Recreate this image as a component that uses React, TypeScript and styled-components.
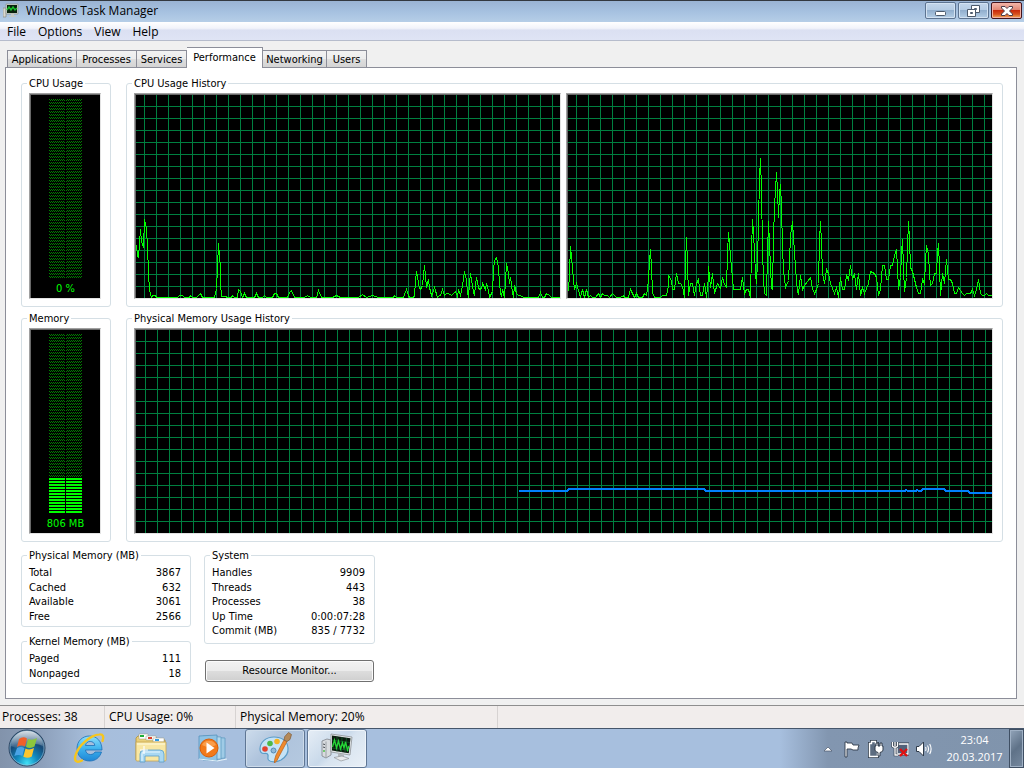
import React from 'react';
import styled, { createGlobalStyle, css } from 'styled-components';

const dialogFont = '"DejaVu Sans Condensed", "Noto Sans", sans-serif';
const shellFont = '"Open Sans", "Noto Sans", sans-serif';

const GlobalStyle = createGlobalStyle`
  *, *::before, *::after { box-sizing: border-box; }
  html, body { margin: 0; padding: 0; background: #f0f0f0; }
  button { font: inherit; color: inherit; margin: 0; cursor: default; }
`;

/* ---------- window frame ---------- */

const Desktop = styled.div`
  display: flex;
  flex-direction: column;
  min-height: 100vh;
  font-family: ${dialogFont};
  font-size: 11px;
  line-height: 14px;
  color: #000;
`;

const TitleBar = styled.header`
  display: flex;
  align-items: flex-start;
  height: 22px;
  padding: 0 2px 0 3px;
  border-top: 1px solid #33383f;
  background: linear-gradient(#9ab3d3, #a6c1e0 50%, #b6cee7);
  font-family: ${shellFont};
  font-size: 12px;
  line-height: 20px;
`;

const TitleText = styled.h1`
  flex: 1;
  margin: 0;
  padding-left: 7px;
  font-size: 12px;
  font-weight: 400;
`;

const TitleIcon = styled.svg`
  width: 16px;
  height: 16px;
  margin-top: 2px;
`;

const WindowButtons = styled.div`
  display: flex;
  gap: 2px;
  padding-top: 1px;
`;

const WindowButton = styled.button<{ $close?: boolean }>`
  display: flex;
  align-items: center;
  justify-content: center;
  width: 31px;
  height: 17px;
  padding: 0;
  border: 1px solid ${(p) => (p.$close ? '#43141c' : '#5d7491')};
  border-radius: 2px;
  box-shadow: inset 0 0 0 1px ${(p) => (p.$close ? '#f3b0a4' : '#d3e2f2')};
  background: ${(p) =>
    p.$close
      ? 'linear-gradient(#f3b7ab, #e08370 48%, #c92a0c 50%, #d8501f 75%, #f0b25c)'
      : 'linear-gradient(#c3d6ea, #b4cbe3 48%, #92afce 50%, #b4cee6)'};
`;

const MenuBar = styled.nav`
  display: flex;
  height: 19px;
  padding: 0 7px;
  gap: 12px;
  border-bottom: 1px solid #b6bccc;
  background: linear-gradient(#fff, #f1f3fa 35%, #dbe0f2 45%, #dfe4f5);
  font-family: ${shellFont};
  font-size: 12px;
`;

const MenuItem = styled.button`
  padding: 2px 0 0;
  border: 0;
  background: none;
  line-height: 16px;
`;

/* ---------- tabs ---------- */

const Client = styled.main`
  display: flex;
  flex: 1;
  flex-direction: column;
  padding: 6px 7px 6px 5px;
`;

const TabStrip = styled.div`
  display: flex;
  align-items: flex-end;
  height: 20px;
  padding-left: 2px;
`;

const Tab = styled.button<{ $width: number; $active?: boolean }>`
  width: ${(p) => p.$width}px;
  height: 17px;
  padding: 2px 0 0;
  border: 1px solid #8c8e99;
  border-bottom: 0;
  border-left-width: 0;
  background: linear-gradient(#f2f2f2, #ececec 50%, #dedede 52%, #d4d4d4);
  line-height: 14px;
  white-space: nowrap;
  &:first-child { border-left-width: 1px; }
  ${(p) =>
    p.$active &&
    css`
      height: 21px;
      margin-bottom: -1px;
      padding: 0 0 1px;
      z-index: 1;
      background: #fff;
    `}
`;

const TabPage = styled.section`
  display: flex;
  flex: 1;
  flex-direction: column;
  gap: 5px;
  padding: 7px 13px 14px 15px;
  border: 1px solid #8c8e99;
  background: #fff;
`;

/* ---------- group boxes ---------- */

const Charts = styled.div`
  display: grid;
  flex: 1;
  grid-template-columns: 90px minmax(0, 1fr);
  grid-template-rows: 1fr 1fr;
  gap: 3px 15px;
`;

const Group = styled.fieldset`
  display: flex;
  flex-direction: column;
  min-width: 0;
  margin: 0;
  padding: 0 5px;
  border: 1px solid #d5dfe5;
  border-radius: 3px;
`;

const Legend = styled.legend`
  padding: 2px 2px 0;
  line-height: 14px;
`;

const ChartRow = styled.div`
  display: flex;
  flex: 1;
  gap: 5px;
  padding: 2px 4px 7px 2px;
`;

const well = css`
  border: 1px solid #a0a0a0;
  border-right-color: #e3e3e3;
  border-bottom-color: #e3e3e3;
  box-shadow: inset 1px 1px 0 #696969;
  background-color: #000;
`;

const GraphWell = styled.div<{ $offset: number }>`
  ${well}
  display: flex;
  flex: 1;
  min-width: 0;
  min-height: 120px;
  padding: 1px 0 0 1px;
  background-image: linear-gradient(90deg, #008040 1px, transparent 1px),
    linear-gradient(#008040 1px, transparent 1px);
  background-origin: content-box;
  background-size: 12px 12px;
  background-position: ${(p) => p.$offset}px 11px;
`;

const Trace = styled.svg<{ $wide?: boolean }>`
  flex: 1;
  width: 100%;
  min-width: 0;
  height: 100%;
  fill: none;
  stroke: ${(p) => (p.$wide ? '#0080ff' : '#00ff00')};
  stroke-width: ${(p) => (p.$wide ? 2 : 1)};
  shape-rendering: crispEdges;
`;

const MeterWell = styled.div`
  ${well}
  display: flex;
  flex: 1;
  flex-direction: column;
  align-items: center;
  padding: 5px 0 0 1px;
  color: #00ff00;
`;

const MeterBars = styled.svg`
  flex: 1;
  width: 33px;
  min-height: 0;
  height: 0;
`;

const MeterLabel = styled.span`
  padding: 2px 0 0;
  line-height: 18px;
`;

/* ---------- statistics ---------- */

const Stats = styled.div`
  display: flex;
  align-items: flex-start;
  gap: 13px;
`;

const StatsColumn = styled.div<{ $width: number; $gap: number }>`
  display: flex;
  flex-direction: column;
  width: ${(p) => p.$width}px;
  gap: ${(p) => p.$gap}px;
`;

const StatsTable = styled.table<{ $space: number }>`
  width: 100%;
  margin: 3px 0 ${(p) => p.$space}px;
  border-collapse: collapse;
  tr { height: 14px; }
  tr:nth-child(even) { height: 15px; }
  th, td { padding: 0; font-weight: 400; line-height: 14px; }
  th { padding-left: 2px; text-align: left; }
  td { padding-right: 4px; text-align: right; }
`;

const ResourceButton = styled.button`
  height: 22px;
  margin: 0 1px;
  padding: 0;
  border: 1px solid #707070;
  border-radius: 3px;
  box-shadow: inset 0 0 0 1px #fbfbfb;
  background: linear-gradient(#f2f2f2, #ebebeb 48%, #dddddd 50%, #cfcfcf);
`;

/* ---------- status bar ---------- */

const StatusBar = styled.footer`
  display: flex;
  height: 23px;
  border-top: 1px solid #8e8e8e;
  background: #f1edec;
  font-family: ${shellFont};
  font-size: 12px;
  line-height: 21px;
`;

const StatusCell = styled.span<{ $width: number; $first?: boolean }>`
  width: ${(p) => p.$width}px;
  padding-left: ${(p) => (p.$first ? 2 : 4)}px;
  border-right: 1px solid #d7d3d2;
  white-space: nowrap;
`;

/* ---------- taskbar ---------- */

const Taskbar = styled.nav`
  display: flex;
  height: 40px;
  border-top: 1px solid #46566b;
  background: linear-gradient(90deg, #8293ab, #8c9fba 40px, #a7bedb 90px, #a7bfde 140px,
    #a7bfde calc(100% - 244px), #8296b0 calc(100% - 196px), #8094ac);
`;

const StartButton = styled.button`
  width: 57px;
  margin-right: 2px;
  padding: 0 0 0 7px;
  border: 0;
  background: none;
  text-align: left;
`;

const TaskItems = styled.div`
  display: flex;
  flex: 1;
  gap: 2px;
`;

const TaskButton = styled.button<{ $open?: boolean; $focused?: boolean }>`
  display: flex;
  align-items: center;
  justify-content: center;
  width: 60px;
  padding: 0 0 2px;
  border: 1px solid transparent;
  border-radius: 3px;
  background: none;
  ${(p) =>
    p.$open &&
    css`
      border-color: #5f7694;
      box-shadow: inset 0 0 0 1px ${p.$focused ? '#eef4fa' : '#cddbea'};
      background: ${p.$focused
        ? 'linear-gradient(135deg, #e6eef6, #c9d9ea 45%, #d8e4f0 55%, #e9f0f7)'
        : 'linear-gradient(135deg, #cddcec, #aec3dc 45%, #b5c9e0)'};
    `}
`;

const Tray = styled.div`
  display: flex;
  align-items: center;
`;

const TrayButton = styled.button`
  display: flex;
  align-items: center;
  justify-content: center;
  width: 24px;
  height: 24px;
  padding: 0;
  border: 0;
  background: none;
`;

const Clock = styled.time`
  width: 73px;
  padding: 0 0 2px 4px;
  color: #fff;
  font-family: ${shellFont};
  font-size: 11px;
  line-height: 17px;
  text-align: center;
`;

const ShowDesktop = styled.button`
  width: 15px;
  height: 39px;
  padding: 0;
  border: 1px solid #3f4f63;
  box-shadow: inset 0 0 0 1px #9fb0c4;
  background: linear-gradient(135deg, #93a5ba, #5f7288 50%, #76899f);
`;

/* ---------- data ---------- */

const cpu0 =
  '0,150 1,161 2,162 4,134 5,146 7,152 8,124 10,133 11,151 12,178 13,195 15,202 16,200 19,200 20,202 41,202 43,200 46,200 48,202 53,202 54,200 56,202 60,202 64,198 66,202 78,202 80,193 81,172 82,148 84,172 84,188 85,201 95,202 96,200 98,202 101,202 102,194 104,196 105,199 106,202 108,198 110,202 118,202 120,198 122,202 126,202 128,200 130,202 136,202 138,198 140,198 142,202 151,202 153,197 155,195 158,202 168,202 171,200 174,202 180,202 182,195 185,202 196,202 200,200 204,202 222,202 226,199 230,202 236,200 242,202 254,202 257,202 258,200 260,202 267,202 268,199 270,194 272,200 273,202 277,202 278,200 279,185 280,176 282,187 283,193 284,194 286,190 287,180 288,170 289,180 290,192 292,184 293,192 295,200 296,198 298,192 301,202 303,200 304,200 306,194 308,200 310,198 312,198 315,200 319,196 321,201 322,194 324,200 326,190 327,183 328,176 330,185 331,197 332,202 333,188 334,178 336,190 337,197 338,200 339,190 340,182 342,192 343,194 345,193 346,188 349,194 350,188 352,195 353,202 354,200 356,196 357,175 358,165 360,162 362,172 363,188 364,197 365,201 366,194 368,202 369,185 370,168 372,178 373,188 374,182 376,197 377,202 378,190 380,198 382,200 384,200 387,202 402,202 404,197 406,202 408,202 410,198 413,200 415,202 424,202';

const cpu1 =
  '0,196 1,177 2,151 3,162 4,172 5,185 6,194 8,188 10,195 12,202 14,194 16,202 18,194 20,202 22,200 24,202 27,202 30,198 32,202 34,198 36,200 39,200 41,202 44,198 48,202 52,202 55,200 56,202 60,202 62,194 64,198 66,202 68,198 70,202 74,202 76,198 78,200 79,193 80,185 81,165 82,154 83,172 84,197 86,202 92,202 94,200 98,200 100,190 100,180 103,185 104,194 106,194 108,178 110,188 112,188 114,191 116,202 117,168 118,142 119,168 120,200 122,188 124,188 126,200 128,188 130,184 132,200 134,200 136,188 138,202 140,182 140,171 142,192 144,178 146,198 149,188 152,193 154,182 156,189 158,192 159,158 160,137 161,148 163,172 165,194 172,194 174,182 176,198 178,194 180,194 182,202 183,155 184,124 185,137 187,178 188,188 189,165 190,128 191,82 192,63 193,95 194,152 195,185 196,198 198,200 199,158 200,126 202,172 203,192 204,194 205,142 206,112 208,77 209,95 210,122 211,98 212,89 213,112 214,152 215,175 217,192 220,185 221,165 222,140 224,126 225,142 227,172 229,196 230,198 232,180 234,194 236,190 242,182 244,193 246,198 248,194 250,188 251,145 252,126 253,148 254,178 256,188 258,174 260,178 262,188 266,198 268,192 270,202 272,182 274,194 276,194 278,180 280,184 282,170 284,184 286,178 288,194 290,178 292,200 294,192 296,198 300,188 302,176 306,178 308,182 310,200 312,194 314,170 316,170 318,184 320,184 322,170 324,170 326,160 328,154 329,172 330,194 332,182 333,158 334,144 335,172 336,196 338,182 339,152 340,126 341,145 342,172 344,176 348,192 350,198 352,198 354,184 356,188 357,165 358,150 360,158 361,178 362,190 364,188 366,178 368,178 369,158 370,148 371,172 372,200 374,178 376,188 378,164 380,184 382,184 384,188 386,198 388,198 390,192 394,198 396,200 398,198 402,198 404,194 406,200 408,194 410,184 412,198 414,200 416,200 418,198 420,200 424,200';

const memory =
  '383,161 432,161 433,159 569,159 571,161 770,161 771,160 773,161 781,161 782,160 784,161 786,161 788,159 809,159 811,161 833,161 835,163 857,163';

const tabs = [
  { label: 'Applications', width: 70 },
  { label: 'Processes', width: 60 },
  { label: 'Services', width: 50 },
  { label: 'Performance', width: 76, active: true },
  { label: 'Networking', width: 64 },
  { label: 'Users', width: 40 },
];

const physical: [string, string][] = [
  ['Total', '3867'],
  ['Cached', '632'],
  ['Available', '3061'],
  ['Free', '2566'],
];
const kernel: [string, string][] = [
  ['Paged', '111'],
  ['Nonpaged', '18'],
];
const system: [string, string][] = [
  ['Handles', '9909'],
  ['Threads', '443'],
  ['Processes', '38'],
  ['Up Time', '0:00:07:28'],
  ['Commit (MB)', '835 / 7732'],
];

/* ---------- pieces ---------- */

const StatsGroup = ({ title, rows, space = 2 }: { title: string; rows: [string, string][]; space?: number }) => (
  <Group>
    <Legend>{title}</Legend>
    <StatsTable $space={space}>
      <tbody>
        {rows.map(([name, value]) => (
          <tr key={name}>
            <th scope="row">{name}</th>
            <td>{value}</td>
          </tr>
        ))}
      </tbody>
    </StatsTable>
  </Group>
);

const Meter = ({ id, level, label }: { id: string; level: number; label: string }) => (
  <MeterWell>
    <MeterBars shapeRendering="crispEdges" aria-hidden="true">
      <defs>
        <pattern id={`${id}-off`} width="2" height="3" patternUnits="userSpaceOnUse">
          <rect width="1" height="1" fill="#008000" />
          <rect x="1" y="1" width="1" height="1" fill="#008000" />
        </pattern>
        <pattern id={`${id}-on`} width="2" height="3" patternUnits="userSpaceOnUse">
          <rect width="2" height="2" fill="#00ff00" />
        </pattern>
      </defs>
      <rect width="33" height="100%" fill={`url(#${id}-off)`} />
      {level > 0 && (
        <>
          <rect y={`${100 - level}%`} width="33" height={`${level}%`} fill="#000" />
          <rect y={`${100 - level}%`} width="33" height={`${level}%`} fill={`url(#${id}-on)`} />
        </>
      )}
      <rect x="16" width="1" height="100%" fill="#000" />
    </MeterBars>
    <MeterLabel>{label}</MeterLabel>
  </MeterWell>
);

const Graph = ({ points, width, offset, wide }: { points: string; width: number; offset: number; wide?: boolean }) => (
  <GraphWell $offset={offset}>
    <Trace $wide={wide} viewBox={`0 0 ${width} 203`} preserveAspectRatio="none" aria-hidden="true">
      <polyline points={points} transform={wide ? undefined : 'translate(0.5 0.5)'} />
    </Trace>
  </GraphWell>
);

const MonitorIcon = () => (
  <svg width="34" height="32" viewBox="0 0 34 32" aria-hidden="true">
    <path d="M2 9l5-2 4 1v15l-5 3-4-2z" fill="#d9dcdf" stroke="#7d838a" strokeWidth=".8" />
    <path d="M6 9.500v16" stroke="#9ba0a5" />
    <path d="M3 12l2 .6M3 15l2 .6" stroke="#4c5258" />
    <circle cx="4" cy="19" r="1" fill="#4fc04a" />
    <path d="M11 2l21 3-2 18-19-3z" fill="#e4e7e9" stroke="#8d9296" strokeWidth=".8" />
    <path d="M12 3.500l18.500 2.700-1.700 15-16.800-2.700z" fill="#0b1c0e" />
    <path d="M12 8l18 2.500M12 12l17.500 2.500M12 16l17 2.500M17 4.500v15M22 5l-.5 15M26.500 6L25 20.500" stroke="#17632f" strokeWidth=".7" />
    <path d="M12.500 15l2-7 2 8 2-7 2 8 2-6 1.500 5 1.500-6 2 8 1.500-4" fill="none" stroke="#25d836" strokeWidth="1.300" />
    <path d="M18 21.500l6 1v4h-6z" fill="#b3b7bb" />
    <path d="M14 25.500l8-1.500 7 2.500-8 2.500z" fill="#e9ebed" stroke="#90959a" strokeWidth=".7" />
  </svg>
);

const StartOrb = () => (
  <svg width="40" height="38" viewBox="0 0 40 38" aria-hidden="true">
    <defs>
      <radialGradient id="orb" cx="50%" cy="92%" r="85%">
        <stop offset="0" stopColor="#3fe0f5" />
        <stop offset=".35" stopColor="#1288bd" />
        <stop offset=".7" stopColor="#174a78" />
        <stop offset="1" stopColor="#4e708f" />
      </radialGradient>
      <linearGradient id="gloss" x2="0" y2="1">
        <stop offset="0" stopColor="#fff" stopOpacity=".75" />
        <stop offset="1" stopColor="#fff" stopOpacity=".1" />
      </linearGradient>
    </defs>
    <circle cx="20" cy="19" r="18" fill="url(#orb)" stroke="#2c4562" />
    <circle cx="20" cy="19" r="17" fill="none" stroke="#9cc4dc" strokeOpacity=".6" />
    <path d="M4 17a16 15 0 0 1 32 0q-8-4-16 0t-16 0z" fill="url(#gloss)" />
    <path d="M12 10q4-3 8-.500l-2 8q-4-2-8 .500z" fill="#f0602a" />
    <path d="M21 10q4 2 9-1l-2.500 8.500q-4 2.500-8.500 .500z" fill="#8cc63c" />
    <path d="M10 19q4-2 7.500 0l-2.200 8q-3.500-2-8 0z" fill="#4aa3e6" />
    <path d="M18.500 19.500q4 2 8.500-.500l-2.200 8.500q-4 2.500-8.500 .200z" fill="#fdc62e" />
  </svg>
);

const ExplorerE = () => (
  <svg width="34" height="34" viewBox="0 0 34 34" aria-hidden="true">
    <defs>
      <linearGradient id="ie" x2="0" y2="1">
        <stop offset="0" stopColor="#8ee0fb" />
        <stop offset=".5" stopColor="#3fb3ee" />
        <stop offset="1" stopColor="#1f86d6" />
      </linearGradient>
    </defs>
    <path
      fillRule="evenodd"
      d="M17.500 5C25 5 30 10.500 30 19H13.500c.3 3 2.500 4.500 5 4.500 2.200 0 3.600-.9 4.500-2.500h6.500C27.800 26.500 23.500 30 17.800 30 10.500 30 5 25 5 17.500S10.500 5 17.500 5zM13.500 14.500h9.300c-.3-2.600-2.100-4-4.600-4s-4.300 1.400-4.700 4z"
      fill="url(#ie)"
      stroke="#1c6fb6"
      strokeWidth=".8"
    />
    <path
      d="M30.500 10c1.500-4 .8-7-3-6.600C19 4 6 14 3.200 25.500c-1 5 2 6.500 6.800 4"
      fill="none"
      stroke="#f6c51d"
      strokeWidth="2.400"
      strokeLinecap="round"
    />
  </svg>
);

const FolderIcon = () => (
  <svg width="34" height="32" viewBox="0 0 34 32" aria-hidden="true">
    <path d="M2 6l2-2h10l1 2h8l1 2h7v20H2z" fill="#e9cf78" stroke="#b18f37" strokeWidth=".8" />
    <path d="M5 2h9v5H5z" fill="#fff" stroke="#9a9a80" strokeWidth=".5" />
    <path d="M6 3h4v2H6z" fill="#1fae38" />
    <path d="M12 4h10v4H12z" fill="#fff" stroke="#9a9a80" strokeWidth=".5" />
    <path d="M14 5h4v2h-4z" fill="#d9402c" />
    <path d="M19 6h11v4H19z" fill="#fff" stroke="#9a9a80" strokeWidth=".5" />
    <path d="M21 7h4v2h-4z" fill="#2f9be4" />
    <path d="M2 10h30v18q0 1-1 1H3q-1 0-1-1z" fill="#f8e7a4" stroke="#c6a650" strokeWidth=".8" />
    <path d="M3 12h28" stroke="#fffbe0" />
    <path d="M6 30v-8q0-4 4-4h16q4 0 4 4v8h-5v-6H11v6z" fill="#a9d8f2" stroke="#5a9fc8" strokeWidth=".8" />
    <path d="M8 29v-7q0-2 2-2h16" fill="none" stroke="#e8f7ff" />
    <path d="M10 14v8M6 18h8" stroke="#fff" strokeWidth="1.200" />
  </svg>
);

const PlayerIcon = () => (
  <svg width="32" height="30" viewBox="0 0 32 30" aria-hidden="true">
    <path d="M10 4l18 1v20l-18 2z" fill="#9fcbe6" stroke="#5f9cc2" strokeWidth=".8" />
    <path d="M6 3l18 1v22l-18 1z" fill="#b4d9ee" stroke="#5f9cc2" strokeWidth=".8" />
    <path d="M2 3l18-1v26L2 26z" fill="#8fc3e4" stroke="#5492bc" strokeWidth=".8" />
    <path d="M2 26l18 2 10-2" fill="none" stroke="#e3f2fa" />
    <circle cx="12" cy="15" r="9" fill="#f27a1a" stroke="#d95e09" />
    <path d="M5 12a8 8 0 0 1 14 0q-7 4-14 0z" fill="#ffb56e" opacity=".6" />
    <path d="M9.500 9.500l8 5.500-8 5.500z" fill="#fff" />
  </svg>
);

const PaintIcon = () => (
  <svg width="34" height="34" viewBox="0 0 34 34" aria-hidden="true">
    <path
      d="M16 6C8 6 2 11 2 18c0 3 1.500 4.500 4 4.500s3.500-.5 4 1.500-1 3 .5 5c2 2.500 8 2.500 12.500 0 5-3 7.500-7.500 7-12C29.500 10 24 6 16 6z"
      fill="#c5e3f6"
      stroke="#5b9cc8"
      strokeWidth="1.200"
    />
    <circle cx="15.500" cy="19.500" r="2.500" fill="#8fb8d8" stroke="#5589b0" />
    <circle cx="7" cy="18" r="2.800" fill="#e2422f" />
    <circle cx="12" cy="12.500" r="2.800" fill="#4db848" />
    <circle cx="19" cy="10.500" r="2.800" fill="#f5b324" />
    <path d="M26 9l3 1.500-8 15q-2 5-4.500 6.500-.500-3 1.500-8z" fill="#f08a2c" stroke="#b9601a" strokeWidth=".7" />
    <path d="M26 9l.8-3.500 3.700-4 3 2-1.500 5-3 2z" fill="#b58a5a" stroke="#7c5a36" strokeWidth=".7" />
  </svg>
);

const FlagIcon = () => (
  <svg width="18" height="18" viewBox="0 0 18 18" aria-hidden="true">
    <path d="M2 2h2v1h5l1 2h6l-1 3v2h-5L8 9H4v8H2z" fill="#fff" stroke="#2f3b4a" strokeWidth=".9" />
  </svg>
);

const PowerIcon = () => (
  <svg width="18" height="18" viewBox="0 0 18 18" aria-hidden="true">
    <path d="M2.500 3.500h2v-2h4v2h2v13h-8z" fill="#5c6c80" stroke="#2f3b4a" strokeWidth="3" />
    <path d="M2.500 3.500h2v-2h4v2h2v13h-8z" fill="#5c6c80" stroke="#fff" strokeWidth="1.400" />
    <path d="M8 6h1V3h2v3h2V3h2v3h1v4q0 2-3 2.500V16h-2v-3.500Q8 12 8 10z" fill="#fff" stroke="#2f3b4a" />
  </svg>
);

const NetworkIcon = () => (
  <svg width="18" height="18" viewBox="0 0 18 18" aria-hidden="true">
    <path d="M6 4h11v10H6z" fill="#52627a" stroke="#2f3b4a" strokeWidth="3" />
    <path d="M6 4h11v10H6z" fill="#52627a" stroke="#fff" strokeWidth="1.300" />
    <path d="M1.500 2v4q0 1 2.500 1.200V15h3M4 2v4M6.500 2v4q0 1-2.500 1.200" fill="none" stroke="#2f3b4a" strokeWidth="2.600" />
    <path d="M1.500 2v4q0 1 2.500 1.200V15h3M4 2v4M6.500 2v4q0 1-2.500 1.200" fill="none" stroke="#fff" strokeWidth="1.300" />
    <path d="M9 9l7 7M16 9l-7 7" stroke="#e01010" strokeWidth="2.400" />
  </svg>
);

const SpeakerIcon = () => (
  <svg width="18" height="18" viewBox="0 0 18 18" aria-hidden="true">
    <path d="M1.500 6.500H4L8.500 2v14L4 11.500H1.500z" fill="#fff" stroke="#2f3b4a" />
    <path d="M10.500 7q1 2 0 4M12.500 5.500q2 3.500 0 7M14.700 4q2.800 5 0 10" fill="none" stroke="#fff" strokeWidth="1.100" />
  </svg>
);

export default function App() {
  return (
    <Desktop>
      <GlobalStyle />
      <TitleBar>
        <TitleIcon viewBox="0 0 16 16" aria-hidden="true">
          <path d="M0 5h3v9H0z" fill="#d8d8d0" stroke="#8b8b83" strokeWidth=".7" />
          <path d="M3 1h12v10H3z" fill="#d5d9d4" stroke="#8a938d" strokeWidth=".7" />
          <path d="M4 2h10v8H4z" fill="#08210c" />
          <path d="M4 7l2-3 2 3 2-3 2 3 2-2" fill="none" stroke="#19c02c" strokeWidth="1.400" />
          <path d="M8 11h3v2h2v1H6v-1h2z" fill="#c3c8c3" />
        </TitleIcon>
        <TitleText>Windows Task Manager</TitleText>
        <WindowButtons>
          <WindowButton type="button" aria-label="Minimize">
            <svg width="12" height="12" viewBox="0 0 12 12" aria-hidden="true">
              <rect x=".5" y="6.500" width="10" height="4" rx="1" fill="#fff" stroke="#4c5a6c" />
            </svg>
          </WindowButton>
          <WindowButton type="button" aria-label="Restore">
            <svg width="13" height="12" viewBox="0 0 13 12" fill="#fff" stroke="#4c5a6c" aria-hidden="true">
              <path fillRule="evenodd" d="M4.500 .5h8v7h-8zM7.500 3.500h2v1h-2z" />
              <path fillRule="evenodd" d="M.5 4.500h8v7h-8zM3.500 7.500h2v1h-2z" />
            </svg>
          </WindowButton>
          <WindowButton type="button" aria-label="Close" $close>
            <svg width="12" height="10" viewBox="0 0 12 10" aria-hidden="true">
              <path
                d="M.5 .5h3.500L6 2.500 8 .5h3.500V2L8.500 5l3 3v1.500H8L6 7.500 4 9.500H.5V8l3-3-3-3z"
                fill="#fff"
                stroke="#4a3a48"
              />
            </svg>
          </WindowButton>
        </WindowButtons>
      </TitleBar>

      <MenuBar aria-label="Menu">
        {['File', 'Options', 'View', 'Help'].map((item) => (
          <MenuItem type="button" key={item}>{item}</MenuItem>
        ))}
      </MenuBar>

      <Client>
        <TabStrip role="tablist">
          {tabs.map((tab) => (
            <Tab
              type="button"
              role="tab"
              key={tab.label}
              aria-selected={!!tab.active}
              $width={tab.width}
              $active={tab.active}
            >
              {tab.label}
            </Tab>
          ))}
        </TabStrip>

        <TabPage role="tabpanel">
          <Charts>
            <Group>
              <Legend>CPU Usage</Legend>
              <ChartRow>
                <Meter id="cpu" level={0} label="0 %" />
              </ChartRow>
            </Group>
            <Group>
              <Legend>CPU Usage History</Legend>
              <ChartRow>
                <Graph points={cpu0} width={424} offset={8} />
                <Graph points={cpu1} width={424} offset={8} />
              </ChartRow>
            </Group>
            <Group>
              <Legend>Memory</Legend>
              <ChartRow>
                <Meter id="mem" level={20} label="806 MB" />
              </ChartRow>
            </Group>
            <Group>
              <Legend>Physical Memory Usage History</Legend>
              <ChartRow>
                <Graph points={memory} width={857} offset={9} wide />
              </ChartRow>
            </Group>
          </Charts>

          <Stats>
            <StatsColumn $width={170} $gap={6}>
              <StatsGroup title="Physical Memory (MB)" rows={physical} />
              <StatsGroup title="Kernel Memory (MB)" rows={kernel} />
            </StatsColumn>
            <StatsColumn $width={171} $gap={16}>
              <StatsGroup title="System" rows={system} space={5} />
              <ResourceButton type="button">Resource Monitor...</ResourceButton>
            </StatsColumn>
          </Stats>
        </TabPage>
      </Client>

      <StatusBar>
        <StatusCell $width={105} $first>Processes: 38</StatusCell>
        <StatusCell $width={131}>CPU Usage: 0%</StatusCell>
        <StatusCell $width={262}>Physical Memory: 20%</StatusCell>
      </StatusBar>

      <Taskbar aria-label="Taskbar">
        <StartButton type="button" aria-label="Start"><StartOrb /></StartButton>
        <TaskItems>
          <TaskButton type="button" aria-label="Internet Explorer"><ExplorerE /></TaskButton>
          <TaskButton type="button" aria-label="Windows Explorer"><FolderIcon /></TaskButton>
          <TaskButton type="button" aria-label="Windows Media Player"><PlayerIcon /></TaskButton>
          <TaskButton type="button" aria-label="Paint" $open><PaintIcon /></TaskButton>
          <TaskButton type="button" aria-label="Task Manager" $open $focused><MonitorIcon /></TaskButton>
        </TaskItems>
        <Tray>
          <TrayButton type="button" aria-label="Show hidden icons">
            <svg width="10" height="6" viewBox="0 0 10 6" aria-hidden="true">
              <path d="M1 5L5 1l4 4z" fill="#fff" stroke="#4a586b" strokeWidth=".7" />
            </svg>
          </TrayButton>
          <TrayButton type="button" aria-label="Action Center"><FlagIcon /></TrayButton>
          <TrayButton type="button" aria-label="Power"><PowerIcon /></TrayButton>
          <TrayButton type="button" aria-label="Network"><NetworkIcon /></TrayButton>
          <TrayButton type="button" aria-label="Volume"><SpeakerIcon /></TrayButton>
          <Clock>23:04<br />20.03.2017</Clock>
          <ShowDesktop type="button" aria-label="Show desktop" />
        </Tray>
      </Taskbar>
    </Desktop>
  );
}
